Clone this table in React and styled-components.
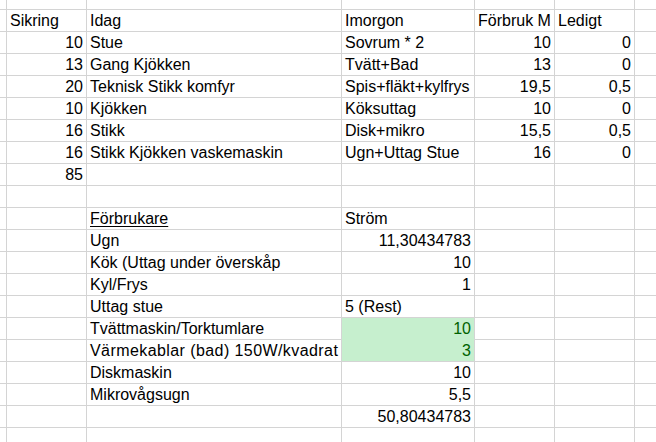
import React from "react";
import styled, { createGlobalStyle } from "styled-components";

const GlobalStyle = createGlobalStyle`
  html, body {
    margin: 0;
    padding: 0;
    background: #ffffff;
  }
  body {
    font-family: "Liberation Sans", Arial, sans-serif;
    font-size: 16px;
    color: #000000;
  }
`;

const GRID = "#d4d4d4";

const Sheet = styled.div`
  display: flex;
  flex-direction: column;
  width: 656px;
  height: 442px;
  overflow: hidden;
  background: #ffffff;
`;

const Row = styled.div`
  display: grid;
  grid-template-columns: 7px 80px 255px 133px 80px 80px 1fr;
  height: ${(p) => p.$height || 22}px;
  flex-shrink: 0;
`;

const Cell = styled.div`
  box-sizing: border-box;
  height: 100%;
  padding: 1px 3px 0;
  border-right: 1px solid ${GRID};
  border-bottom: ${(p) =>
    p.$open ? "none" : `1px solid ${p.$joinBelow ? "#c6efce" : GRID}`};
  background: ${(p) => (p.$good ? "#c6efce" : "transparent")};
  color: ${(p) => (p.$good ? "#006100" : "#000000")};
  text-align: ${(p) => p.$align || "left"};
  line-height: 20px;
  letter-spacing: ${(p) => (p.$wide ? "0.42px" : "normal")};
  white-space: nowrap;
  overflow: hidden;
  text-decoration: ${(p) => (p.$underline ? "underline" : "none")};
  text-underline-offset: 2px;
`;

const EdgeCell = styled.div`
  box-sizing: border-box;
  height: 100%;
  border-right: ${(p) => (p.$last ? "none" : `1px solid ${GRID}`)};
  border-bottom: ${(p) => (p.$open ? "none" : `1px solid ${GRID}`)};
`;

const L = (text, extra = {}) => ({ text, align: "left", ...extra });
const R = (text, extra = {}) => ({ text, align: "right", ...extra });

// Sikring | Idag | Imorgon | Förbruk M | Ledigt
const rows = [
  [L("Sikring"), L("Idag"), L("Imorgon"), L("Förbruk M"), L("Ledigt")],
  [R("10"), L("Stue"), L("Sovrum * 2"), R("10"), R("0")],
  [R("13"), L("Gang Kjökken"), L("Tvätt+Bad"), R("13"), R("0")],
  [R("20"), L("Teknisk Stikk komfyr"), L("Spis+fläkt+kylfrys"), R("19,5"), R("0,5")],
  [R("10"), L("Kjökken"), L("Köksuttag"), R("10"), R("0")],
  [R("16"), L("Stikk"), L("Disk+mikro"), R("15,5"), R("0,5")],
  [R("16"), L("Stikk Kjökken vaskemaskin"), L("Ugn+Uttag Stue"), R("16"), R("0")],
  [R("85"), L(""), L(""), L(""), L("")],
  [L(""), L(""), L(""), L(""), L("")],
  [L(""), L("Förbrukare", { underline: true }), L("Ström"), L(""), L("")],
  [L(""), L("Ugn"), R("11,30434783"), L(""), L("")],
  [L(""), L("Kök (Uttag under överskåp"), R("10"), L(""), L("")],
  [L(""), L("Kyl/Frys"), R("1"), L(""), L("")],
  [L(""), L("Uttag stue"), L("5 (Rest)"), L(""), L("")],
  [L(""), L("Tvättmaskin/Torktumlare"), R("10", { good: true, joinBelow: true }), L(""), L("")],
  [L(""), L("Värmekablar (bad) 150W/kvadrat", { wide: true }), R("3", { good: true }), L(""), L("")],
  [L(""), L("Diskmaskin"), R("10"), L(""), L("")],
  [L(""), L("Mikrovågsugn"), R("5,5"), L(""), L("")],
  [L(""), L(""), R("50,80434783"), L(""), L("")],
];

const emptyRow = [L(""), L(""), L(""), L(""), L("")];

function SheetRow({ cells, height, open }) {
  return (
    <Row $height={height}>
      <EdgeCell $open={open} />
      {cells.map((c, i) => (
        <Cell
          key={i}
          $align={c.align}
          $good={c.good}
          $joinBelow={c.joinBelow}
          $underline={c.underline}
          $wide={c.wide}
          $open={open}
        >
          {c.text}
        </Cell>
      ))}
      <EdgeCell $last $open={open} />
    </Row>
  );
}

export default function App() {
  return (
    <>
      <GlobalStyle />
      <Sheet>
        <SheetRow cells={emptyRow} height={10} />
        {rows.map((cells, i) => (
          <SheetRow key={i} cells={cells} />
        ))}
        <SheetRow cells={emptyRow} height={15} open />
      </Sheet>
    </>
  );
}
